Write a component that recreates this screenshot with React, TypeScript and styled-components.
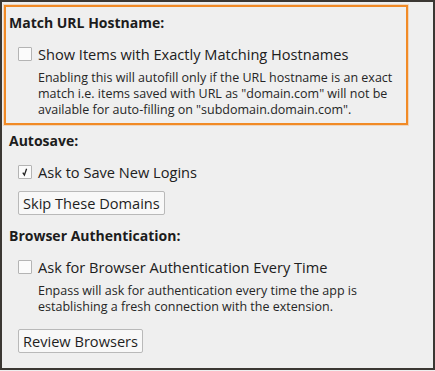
import React, { useState } from 'react';
import styled, { createGlobalStyle } from 'styled-components';

const GlobalStyle = createGlobalStyle`
  html, body {
    margin: 0;
    padding: 0;
    background: #efefef;
  }
  body {
    font-family: 'Open Sans', 'Noto Sans', sans-serif;
    color: #202020;
  }
`;

const Frame = styled.div`
  box-sizing: border-box;
  width: 435px;
  height: 370px;
  border: 2px solid #3b3733;
  background: #efefef;
  padding: 3px 0 0 2px;
  display: flex;
  flex-direction: column;
`;

const Section = styled.section<{ $highlight?: boolean }>`
  box-sizing: border-box;
  width: 404px;
  display: flex;
  flex-direction: column;
  border: 2px solid ${(p) => (p.$highlight ? '#f18a26' : 'transparent')};
  box-shadow: ${(p) => (p.$highlight ? '0 0 0 1px rgba(241, 138, 38, 0.25)' : 'none')};
  padding: ${(p) => (p.$highlight ? '6px 0 5px 3px' : '4px 0 3px 3px')};
`;

const Title = styled.h3`
  margin: 0;
  font-size: 14px;
  font-weight: 700;
  line-height: 20px;
  color: #1c1c1c;
`;

const Option = styled.label`
  display: flex;
  align-items: center;
  gap: 6px;
  margin: 12px 0 0 9px;
  font-size: 14.6px;
  line-height: 18px;
  cursor: pointer;
`;

const Box = styled.span`
  box-sizing: border-box;
  width: 14px;
  height: 14px;
  border: 1px solid #b4b4b4;
  background: #fbfbfb;
  border-radius: 1px;
  display: flex;
  align-items: center;
  justify-content: center;
`;

const Hint = styled.p`
  margin: 7px 0 0 29px;
  font-size: 12.5px;
  line-height: 16px;
  color: #262626;
`;

const Button = styled.button<{ $gap?: number }>`
  align-self: flex-start;
  margin: ${(p) => p.$gap ?? 11}px 0 0 9px;
  height: 24px;
  padding: 0 4px;
  font-family: inherit;
  font-size: 14.6px;
  color: #1e1e1e;
  background: #f8f8f8;
  border: 1px solid #b9b9b9;
  border-radius: 2px;
`;

const Check = ({ checked }: { checked: boolean }) => (
  <Box>
    {checked && (
      <svg width="10" height="10" viewBox="0 0 10 10">
        <path d="M2.8 5.6 L4.4 8 L6.6 1.8" fill="none" stroke="#222" strokeWidth="1.3" />
      </svg>
    )}
  </Box>
);

const App: React.FC = () => {
  const [exact, setExact] = useState(false);
  const [autosave, setAutosave] = useState(true);
  const [browserAuth, setBrowserAuth] = useState(false);

  return (
    <>
      <GlobalStyle />
      <Frame>
        <Section $highlight>
          <Title>Match URL Hostname:</Title>
          <Option onClick={() => setExact((v) => !v)}>
            <Check checked={exact} />
            Show Items with Exactly Matching Hostnames
          </Option>
          <Hint>
            Enabling this will autofill only if the URL hostname is an exact match i.e. items saved
            with URL as "domain.com" will not be available for auto-filling on "subdomain.domain.com".
          </Hint>
        </Section>
        <Section>
          <Title>Autosave:</Title>
          <Option onClick={() => setAutosave((v) => !v)}>
            <Check checked={autosave} />
            Ask to Save New Logins
          </Option>
          <Button $gap={10}>Skip These Domains</Button>
        </Section>
        <Section>
          <Title>Browser Authentication:</Title>
          <Option onClick={() => setBrowserAuth((v) => !v)}>
            <Check checked={browserAuth} />
            Ask for Browser Authentication Every Time
          </Option>
          <Hint>
            Enpass will ask for authentication every time the app is establishing a fresh connection
            with the extension.
          </Hint>
          <Button $gap={14}>Review Browsers</Button>
        </Section>
      </Frame>
    </>
  );
};

export default App;
